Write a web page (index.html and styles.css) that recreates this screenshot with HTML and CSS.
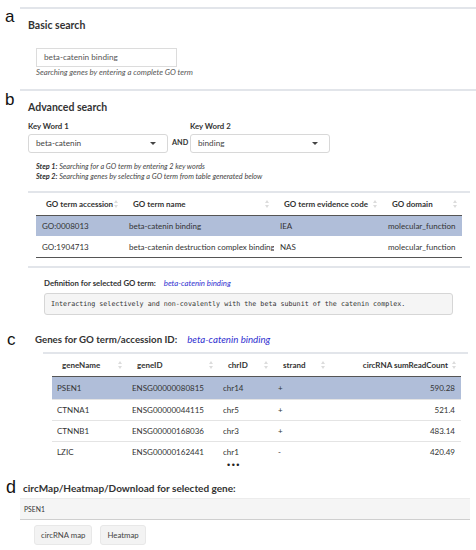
FILE: index.html
```html
<!DOCTYPE html>
<html>
<head>
<meta charset="utf-8">
<link rel="stylesheet" href="styles.css">
</head>
<body>
<section class="sec sec-a">
  <div class="lbl">a</div>
  <div class="main ruled">
    <h3 class="h-basic">Basic search</h3>
    <div class="textbox">beta-catenin binding</div>
    <p class="help">Searching genes by entering a complete GO term</p>
  </div>
</section>

<section class="sec sec-b">
  <div class="lbl">b</div>
  <div class="main ruled">
    <h3 class="h-adv">Advanced search</h3>
    <div class="kw-row">
      <div class="kw">
        <div class="kw-label">Key Word 1</div>
        <div class="select">beta-catenin<span class="caret"></span></div>
      </div>
      <div class="and">AND</div>
      <div class="kw">
        <div class="kw-label">Key Word 2</div>
        <div class="select">binding<span class="caret"></span></div>
      </div>
    </div>
    <div class="steps">
      <p><b>Step 1:</b> Searching for a GO term by entering 2 key words</p>
      <p><b>Step 2:</b> Searching genes by selecting a GO term from table generated below</p>
    </div>
    <div class="go-wrap">
      <table class="dt go-table">
        <colgroup><col class="g1"><col class="g2"><col class="g3"><col class="g4"></colgroup>
        <thead>
          <tr>
            <th><div class="th">GO term accession<span class="sort"></span></div></th>
            <th><div class="th">GO term name<span class="sort"></span></div></th>
            <th><div class="th">GO term evidence code<span class="sort"></span></div></th>
            <th><div class="th">GO domain<span class="sort"></span></div></th>
          </tr>
        </thead>
        <tbody>
          <tr class="sel"><td>GO:0008013</td><td>beta-catenin binding</td><td>IEA</td><td>molecular_function</td></tr>
          <tr class="last"><td>GO:1904713</td><td>beta-catenin destruction complex binding</td><td>NAS</td><td>molecular_function</td></tr>
        </tbody>
      </table>
    </div>
    <div class="def">
      <p class="def-line"><b>Definition for selected GO term:</b><span class="term">beta-catenin binding</span></p>
      <pre class="def-pre">Interacting selectively and non-covalently with the beta subunit of the catenin complex.</pre>
    </div>
  </div>
</section>

<section class="sec sec-c">
  <div class="lbl">c</div>
  <div class="main">
    <h2 class="h-big">Genes for GO term/accession ID:<span class="term">beta-catenin binding</span></h2>
    <div class="gene-wrap">
      <table class="dt gene-table">
        <colgroup><col class="c1"><col class="c2"><col class="c3"><col class="c4"><col class="c5"></colgroup>
        <thead>
          <tr>
            <th><div class="th">geneName<span class="sort"></span></div></th>
            <th><div class="th">geneID<span class="sort"></span></div></th>
            <th><div class="th">chrID<span class="sort"></span></div></th>
            <th><div class="th">strand<span class="sort"></span></div></th>
            <th><div class="th th-right">circRNA sumReadCount<span class="sort"></span></div></th>
          </tr>
        </thead>
        <tbody>
          <tr class="sel"><td>PSEN1</td><td>ENSG00000080815</td><td>chr14</td><td>+</td><td class="num">590.28</td></tr>
          <tr><td>CTNNA1</td><td>ENSG00000044115</td><td>chr5</td><td>+</td><td class="num">521.4</td></tr>
          <tr><td>CTNNB1</td><td>ENSG00000168036</td><td>chr3</td><td>+</td><td class="num">483.14</td></tr>
          <tr><td>LZIC</td><td>ENSG00000162441</td><td>chr1</td><td>-</td><td class="num">420.49</td></tr>
        </tbody>
      </table>
    </div>
    <div class="ellipsis">&bull;&bull;&bull;</div>
  </div>
</section>

<section class="sec sec-d">
  <div class="lbl">d</div>
  <div class="main">
    <h2 class="h-big">circMap/Heatmap/Download for selected gene:</h2>
    <div class="gene-box">PSEN1</div>
    <div class="btns">
      <span class="btn">circRNA map</span>
      <span class="btn">Heatmap</span>
    </div>
  </div>
</section>
</body>
</html>
```

FILE: styles.css
```css
* { box-sizing: border-box; }
html, body { margin: 0; padding: 0; background: #fff; }
body {
  width: 476px;
  height: 550px;
  overflow: hidden;
  font-family: Lato, "Open Sans", sans-serif;
  color: #333;
}
p { margin: 0; }

.sec { display: flex; }
.lbl {
  flex: none;
  font-family: "Liberation Sans", Arial, sans-serif;
  font-size: 17px;
  line-height: 17px;
  color: #111;
}
.main { flex: 1; min-width: 0; }
.ruled { border-top: 2px solid #e2e5ea; padding-left: 8px; }

h3 { margin: 0; font-size: 10.5px; line-height: 14px; font-weight: 700; color: #333; }

/* section a */
.sec-a { padding-top: 7px; height: 89px; }
.sec-a .lbl { width: 20px; padding: 1px 0 0 5px; }
.h-basic { padding-top: 9px; }
.textbox {
  margin: 16px 0 0 8px;
  width: 141px;
  height: 19px;
  border: 1px solid #dcdcdc;
  font-size: 8.2px;
  line-height: 17px;
  padding-left: 7px;
  color: #555;
}
.help { margin-left: 8px; font-size: 7.8px; line-height: 11px; font-style: italic; color: #555; }

/* section b */
.sec-b { height: 236px; }
.sec-b .lbl { width: 20px; padding: 2px 0 0 5px; }
.h-adv { padding-top: 9px; }
.kw-row { display: flex; margin-top: 7px; }
.kw { width: 140px; }
.kw-label { font-size: 7.8px; line-height: 11px; font-weight: 700; color: #333; }
.select {
  position: relative;
  margin-top: 2px;
  height: 19px;
  border: 1px solid #d8d8d8;
  border-radius: 3px;
  font-size: 8.2px;
  line-height: 17px;
  padding-left: 7px;
  color: #444;
}
.caret {
  position: absolute;
  right: 11px;
  top: 7px;
  width: 0;
  height: 0;
  border-left: 3px solid transparent;
  border-right: 3px solid transparent;
  border-top: 3px solid #444;
}
.and { width: 22px; padding: 17px 0 0 4px; font-size: 7.3px; font-weight: 700; color: #333; line-height: 10px; }
.steps { margin: 9px 0 0 8px; font-size: 7.3px; line-height: 10px; font-style: italic; color: #444; }
.steps b { color: #333; }

.go-wrap {
  margin-top: 9px;
  width: 442px;
  border-top: 2px solid #e2e5ea;
  border-bottom: 2px solid #e2e5ea;
  padding: 0 0 8px 8px;
}

.dt { border-collapse: collapse; table-layout: fixed; font-size: 8px; color: #333; }
.dt th {
  text-align: left;
  font-weight: 700;
  white-space: nowrap;
  padding: 5px 5px 5px 10px;
  line-height: 12px;
  border-bottom: 1px solid #555;
}
.th { display: flex; align-items: center; }
.th .sort { margin-left: auto; }
.th-right { justify-content: flex-end; }
.th-right .sort { margin-left: 4px; }
.sort { width: 4px; height: 8px; flex: none; position: relative; }
.sort::before, .sort::after {
  content: "";
  position: absolute;
  left: 0;
  border-left: 2px solid transparent;
  border-right: 2px solid transparent;
}
.sort::before { top: 0; border-bottom: 3px solid #dcdcdc; }
.sort::after { bottom: 0; border-top: 3px solid #dcdcdc; }
.dt td { padding: 4px 5px 4px 6px; line-height: 12px; white-space: nowrap; overflow: hidden; }
.dt tr.sel td { background: #b0bed9; }

.go-table { width: 426px; }
.go-table col.g1 { width: 87px; }
.go-table col.g2 { width: 151px; }
.go-table col.g3 { width: 108px; }
.go-table col.g4 { width: 80px; }
.go-table tr.last td { padding-top: 5px; border-bottom: 1px solid #555; }

.def { padding: 9px 0 0 16px; }
.def-line { font-size: 7.8px; line-height: 12px; }
.term { color: #2f2fd0; font-style: italic; font-weight: 400; margin-left: 8px; }
.def-pre {
  margin: 4px 0 0 0;
  width: 409px;
  height: 22px;
  background: #f5f5f5;
  border: 1px solid #d6d6d6;
  border-radius: 3px;
  font-family: "DejaVu Sans Mono", "Liberation Mono", monospace;
  font-size: 6.7px;
  line-height: 20px;
  padding-left: 6px;
  color: #333;
}

/* section c */
.sec-c { height: 150px; }
.sec-c .lbl { width: 35px; padding: 6px 0 0 7px; }
.h-big { margin: 0; font-size: 10px; line-height: 14px; font-weight: 700; color: #333; padding-top: 7px; }
.sec-c .h-big { font-size: 9.7px; }
.h-big .term { margin-left: 10px; }
.gene-wrap {
  margin: 6px 0 0 8px;
  width: 425px;
  height: 106px;
  overflow: hidden;
  border-top: 2px solid #e2e5ea;
  padding-left: 9px;
}
.gene-table { width: 409px; }
.gene-table col.c1 { width: 75px; }
.gene-table col.c2 { width: 91px; }
.gene-table col.c3 { width: 55px; }
.gene-table col.c4 { width: 57px; }
.gene-table col.c5 { width: 131px; }
.gene-table th { padding-top: 5px; padding-bottom: 5px; }
.gene-table td { border-top: 1px solid #e4e4e4; padding: 4px 5px 4px 5px; line-height: 12px; }
.gene-table tr.sel td { border-top: none; padding-top: 5px; padding-bottom: 5px; }
.gene-table td.num { text-align: right; padding-right: 6px; }
.ellipsis {
  margin: 2px 0 0 192px;
  font-family: "Liberation Sans", Arial, sans-serif;
  font-size: 9px;
  letter-spacing: 1.5px;
  line-height: 10px;
  color: #222;
}

/* section d */
.sec-d .lbl { width: 17px; padding: 4px 0 0 6px; font-size: 18px; }
.sec-d .h-big { padding: 6px 0 0 6px; }
.gene-box {
  margin: 3px 0 0 3px;
  width: 450px;
  height: 22px;
  background: #f5f5f5;
  border-top: 1px solid #ececec;
  border-bottom: 1px solid #cfcfcf;
  font-size: 6.8px;
  line-height: 20px;
  padding-left: 4px;
  color: #333;
}
.btns { display: flex; gap: 8px; margin: 5px 0 0 17px; }
.btn {
  height: 20px;
  padding: 0 6px;
  background: #f3f3f3;
  border: 1px solid #e8e8e8;
  border-radius: 3px;
  font-size: 7.8px;
  line-height: 18px;
  color: #444;
}
```
